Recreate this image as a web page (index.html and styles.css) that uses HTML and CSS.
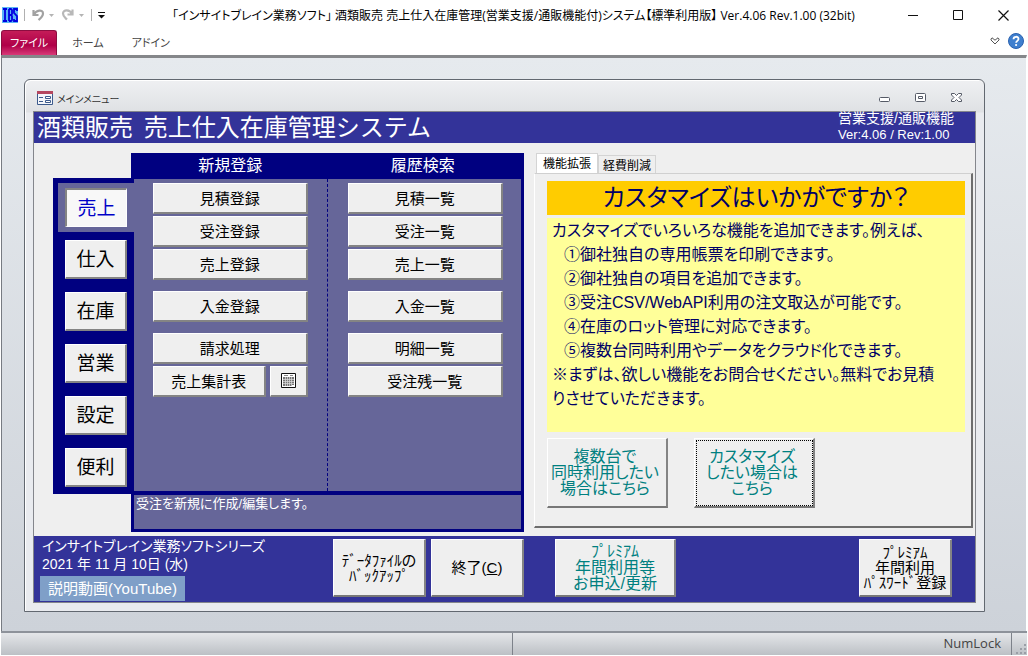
FILE: index.html
```html
<!DOCTYPE html>
<html lang="ja">
<head>
<meta charset="utf-8">
<title>酒類販売 売上仕入在庫管理システム</title>
<link rel="stylesheet" href="styles.css">
</head>
<body>
<header class="titlebar">
  <div class="quick">
    <svg class="logo" width="16" height="16" viewBox="0 0 16 16" role="img" aria-label="IBS"><rect width="16" height="16" fill="#5ab4f5"/><path d="M1 2h4M3 2v12M1 14h4M7 2v12M7 2h2l1 1v4l-1 1 1 1v4l-1 1H7M7 8h2M15 4V2h-3v4l3 3v5h-3v-2" fill="none" stroke="#0000e0" stroke-width="1.800"/></svg>
    <i class="bar"></i>
    <button class="ghost" aria-label="元に戻す"><svg width="24" height="14" viewBox="0 0 24 14"><path d="M2.500 2v5h5M3 6.500C5 2 12 1 12 5.500c0 3-2 4.500-4.500 6.500" fill="none" stroke="#a2a2a2" stroke-width="2.200"/><path d="M18 6h5l-2.500 3z" fill="#b4b4b4"/></svg></button>
    <button class="ghost" aria-label="やり直し"><svg width="24" height="14" viewBox="0 0 24 14"><path d="M11.500 1.500v5h-5M11 6C9 1.500 2 1 2 5.500c0 3 2 4 4 6" fill="none" stroke="#b8b8b8" stroke-width="2.200"/><path d="M18 6h5l-2.500 3z" fill="#b4b4b4"/></svg></button>
    <i class="bar"></i>
    <button class="ghost" aria-label="カスタマイズ"><svg width="8" height="8" viewBox="0 0 8 8"><path d="M0 1.500h7" stroke="#111"/><path d="M0 4h7L3.500 7.500z" fill="#111"/></svg></button>
  </div>
  <h1 class="app-title">「インサイトブレイン業務ソフト」 酒類販売 売上仕入在庫管理(営業支援/通販機能付)システム【標準利用版】 Ver.4.06 Rev.1.00 (32bit)</h1>
  <div class="caption">
    <button class="ghost" aria-label="最小化"><svg width="10" height="10" viewBox="0 0 10 10"><path d="M0 5.500h10" stroke="#111"/></svg></button>
    <button class="ghost" aria-label="最大化"><svg width="10" height="10" viewBox="0 0 10 10"><path d="M.5.5h9v9h-9z" fill="none" stroke="#111"/></svg></button>
    <button class="ghost" aria-label="閉じる"><svg width="11" height="11" viewBox="0 0 11 11"><path d="M.5.5l10 10M10.500.5l-10 10" stroke="#111" stroke-width="1.200"/></svg></button>
  </div>
</header>
<nav class="ribbon">
  <button class="ribbon-tab file">ファイル</button>
  <button class="ribbon-tab">ホーム</button>
  <button class="ribbon-tab">アドイン</button>
  <div class="ribbon-end">
    <button class="ghost" aria-label="リボンの展開"><svg width="10" height="8" viewBox="0 0 10 8"><path d="M1 2l1-1.200 3 2.400L8 .8 9 2v1L5 7 1 3z" fill="#fff" stroke="#555"/></svg></button>
    <button class="ghost" aria-label="ヘルプ"><svg width="16" height="16" viewBox="0 0 16 16"><circle cx="8" cy="8" r="7.500" fill="#3f7fce" stroke="#2a62b0"/><path d="M5.500 6.200C5.500 3 10.500 3 10.500 6c0 1.800-2.400 2-2.400 3.800" fill="none" stroke="#fff" stroke-width="1.800"/><circle cx="8.100" cy="12" r="1.100" fill="#fff"/></svg></button>
  </div>
</nav>
<main class="workspace">
  <section class="window">
    <div class="window-bar">
      <svg width="16" height="14" viewBox="0 0 16 14"><path d="M.5.500h15v13H.5z" fill="#f4f6fa" stroke="#3c5a8c"/><path d="M0 0h16v3H0z" fill="#b5475f"/><path d="M2 6.500h4M2 10.500h4" stroke="#3c5a8c"/><path d="M8.500 5.500h5v2h-5zM8.500 9.500h5v2h-5z" fill="#fff" stroke="#3c5a8c"/></svg>
      <h2 class="window-title">メインメニュー</h2>
      <div class="window-buttons">
        <button class="ghost" aria-label="最小化"><svg width="12" height="10" viewBox="0 0 12 10"><rect x=".5" y="4.500" width="10" height="4" rx="1" fill="#fff" stroke="#555a66"/></svg></button>
        <button class="ghost" aria-label="元のサイズ"><svg width="12" height="10" viewBox="0 0 12 10"><rect x=".5" y=".5" width="10" height="8" rx="1" fill="#fff" stroke="#555a66"/><path d="M3.500 3.500h4v2h-4z" fill="none" stroke="#555a66"/></svg></button>
        <button class="ghost" aria-label="閉じる"><svg width="12" height="10" viewBox="0 0 12 10"><path d="M.5.5h3l2 2 2-2h3v1.500L8 4.500 10.500 7v1.500h-3l-2-2-2 2h-3V7L3 4.500.5 2z" fill="#fff" stroke="#555a66"/></svg></button>
      </div>
    </div>
    <div class="form">
      <div class="form-head">
        <h3 class="form-title">酒類販売  売上仕入在庫管理システム</h3>
        <p class="version">営業支援/通販機能<br><span class="latin">Ver:4.06 / Rev:1.00</span></p>
      </div>
      <div class="form-main">
        <div class="menu">
          <div class="side">
            <div class="side-active"><button class="btn pressed">売上</button></div>
            <button class="btn">仕入</button>
            <button class="btn">在庫</button>
            <button class="btn">営業</button>
            <button class="btn">設定</button>
            <button class="btn">便利</button>
          </div>
          <div class="panel">
            <div class="panel-head"><span>新規登録</span><span>履歴検索</span></div>
            <div class="panel-body">
              <div class="col">
                <button class="btn">見積登録</button>
                <button class="btn">受注登録</button>
                <button class="btn">売上登録</button>
                <button class="btn apart">入金登録</button>
                <button class="btn apart">請求処理</button>
                <div class="pair">
                  <button class="btn">売上集計表</button>
                  <button class="btn small" aria-label="カレンダー"><svg width="15" height="15" viewBox="0 0 15 15"><path d="M.5.500h14v14H.5z" fill="#fff" stroke="#111"/><path d="M3 2.500h4M9 2.500h3" stroke="#888"/><path d="M2 4h11v9H2z" fill="#777"/><path d="M2 6.500h11M2 8.500h11M2 10.500h11M4.500 4v9M6.500 4v9M8.500 4v9M10.500 4v9" stroke="#ddd" stroke-width=".7"/><path d="M11 12h2v1h-2z" fill="#fff"/></svg></button>
                </div>
              </div>
              <div class="col">
                <button class="btn">見積一覧</button>
                <button class="btn">受注一覧</button>
                <button class="btn">売上一覧</button>
                <button class="btn apart">入金一覧</button>
                <button class="btn apart">明細一覧</button>
                <button class="btn">受注残一覧</button>
              </div>
            </div>
            <p class="hint">受注を新規に作成/編集します。</p>
          </div>
        </div>
        <div class="promo">
          <div class="tabs" role="tablist">
            <button class="tab current" role="tab" aria-selected="true">機能拡張</button>
            <button class="tab" role="tab" aria-selected="false">経費削減</button>
          </div>
          <div class="page">
            <h3 class="promo-title">カスタマイズはいかがですか？</h3>
            <div class="promo-text">
              <p>カスタマイズでいろいろな機能を追加できます。例えば、</p>
              <ul>
                <li>①御社独自の専用帳票を印刷できます。</li>
                <li>②御社独自の項目を追加できます。</li>
                <li>③受注CSV/WebAPI利用の注文取込が可能です。</li>
                <li>④在庫のロット管理に対応できます。</li>
                <li>⑤複数台同時利用やデータをクラウド化できます。</li>
              </ul>
              <p>※まずは、欲しい機能をお問合せください。無料でお見積<br>りさせていただきます。</p>
            </div>
            <div class="promo-actions">
              <button class="btn teal">複数台で<br>同時利用したい<br>場合はこちら</button>
              <button class="btn teal focused">カスタマイズ<br>したい場合は<br>こちら</button>
            </div>
          </div>
        </div>
      </div>
      <footer class="form-foot">
        <div class="info">
          <p>インサイトブレイン業務ソフトシリーズ</p>
          <p>2021 年 11 月 10日 (水)</p>
          <a class="video" href="#">説明動画(YouTube)</a>
        </div>
        <button class="btn">ﾃﾞｰﾀﾌｧｲﾙの<br>ﾊﾞｯｸｱｯﾌﾟ</button>
        <button class="btn">終了(<u>C</u>)</button>
        <button class="btn teal">ﾌﾟﾚﾐｱﾑ<br>年間利用等<br>お申込/更新</button>
        <button class="btn last">ﾌﾟﾚﾐｱﾑ<br>年間利用<br>ﾊﾟｽﾜｰﾄﾞ登録</button>
      </footer>
    </div>
  </section>
</main>
<div class="status">
  <div class="status-left"></div>
  <div class="status-right">NumLock</div>
  <svg class="grip" width="12" height="12" viewBox="0 0 12 12"><path d="M9 1h2v2H9zM9 5h2v2H9zM5 5h2v2H5zM9 9h2v2H9zM5 9h2v2H5zM1 9h2v2H1z" fill="#9a9ea6"/></svg>
</div>
</body>
</html>
```
FILE: styles.css
```css
* { box-sizing: border-box; }
body, h1, h2, h3, p, ul { margin: 0; padding: 0; font-weight: 400; }
ul { list-style: none; }
button { font: inherit; color: inherit; border: 0; padding: 0; background: none; white-space: nowrap; }
svg { display: block; }

body {
  display: flex;
  flex-direction: column;
  min-height: 100vh;
  padding-right: 1px;
  background: #fff;
  color: #000;
  font-family: "Liberation Sans", "Noto Sans CJK JP", sans-serif;
  font-size: 14px;
  font-feature-settings: "palt";
}

.titlebar {
  display: grid;
  grid-template-columns: 1fr auto 1fr;
  align-items: center;
  height: 30px;
}
.quick { display: flex; align-items: center; gap: 6px; padding-left: 2px; }
.bar { width: 1px; height: 12px; background: #b0b0b0; }
.app-title, .window-title, .ribbon { font-family: "Open Sans", "Noto Sans CJK JP", sans-serif; }
.app-title { font-size: 12px; white-space: nowrap; }
.caption { display: flex; align-items: center; justify-content: flex-end; gap: 35px; padding-right: 18px; }

.ribbon { display: flex; align-items: stretch; height: 25px; padding-left: 1px; color: #444; font-size: 11px; }
.ribbon-tab { padding: 0 12px 2px; }
.ribbon-tab + .ribbon-tab { padding: 0 13px 2px 15px; }
.ribbon-tab.file {
  padding: 0 8px 3px;
  border: 1px solid #8c0d40;
  border-bottom: 0;
  border-radius: 3px 3px 0 0;
  background: linear-gradient(#c41c58, #b00048 60%, #d83a78);
  color: #fff;
}
.ribbon-end { display: flex; align-items: center; gap: 8px; margin-left: auto; padding: 0 3px 3px 0; }

.workspace {
  flex: 1;
  margin-left: 1px;
  padding: 21px 41px 19px 22px;
  border-top: 3px solid #85878a;
  border-left: 1px solid #777b82;
  border-right: 1px solid #fff;
  background: linear-gradient(#e6eaee, #cdd2d9);
}
.window {
  border: 1px solid #626870;
  border-radius: 6px 6px 0 0;
  padding: 0 8px 8px;
  background: linear-gradient(#eff0f2, #dfe1e4 32px, #e9ebef 33px);
  box-shadow: inset 1px 1px #fff;
}
.window-bar { display: flex; align-items: center; height: 31px; padding: 5px 13px 0 4px; }
.window-title { margin-left: 4px; color: #333; font-size: 10px; }
.window-buttons { display: flex; gap: 24px; margin-left: auto; }

.form { border: 1px solid #84868c; background: #efefef; }
.form-head {
  display: flex;
  justify-content: space-between;
  height: 31px;
  padding: 0 21px 0 3px;
  background: #333399;
  color: #fff;
}
.form-title { font: 24px/28px "Noto Sans CJK JP", sans-serif; font-feature-settings: normal; white-space: pre; }
.version { font-size: 14px; line-height: 16px; margin-top: -2px; white-space: nowrap; }
.latin { font-size: 13px; }

.form-main { display: flex; gap: 10px; padding: 10px 2px 4px 19px; }
.menu { display: flex; flex: 471 1 0; align-items: flex-start; }
.side {
  position: relative;
  display: flex;
  flex-direction: column;
  gap: 13px;
  width: 81px;
  margin: 25px -3px 0 0;
  padding: 5px 7px 7px 12px;
  background: #000080;
  font-size: 19px;
}
.side-active { display: flex; margin: 0 -7px -5px; padding: 5px 7px; background: #666699; }
.side .btn { width: 62px; height: 39px; padding-bottom: 3px; }

.btn {
  border: 1px solid;
  border-width: 1px 2px 2px 1px;
  border-color: #fff #848484 #848484 #fff;
  background: #efefef;
}
.btn.pressed {
  border-width: 2px 1px 1px 2px;
  border-color: #848484 #fff #fff #848484;
  background: #f8f8f8;
  color: #0000c8;
}
.teal { color: #008080; }

.panel { flex: 1; border: solid #000080; border-width: 0 3px 3px; background: #666699; color: #fff; }
.panel-head { display: grid; grid-template-columns: 1fr 1fr; height: 26px; padding-right: 2px; background: #000080; font-size: 16px; line-height: 26px; text-align: center; }
.panel-body { display: grid; grid-template-columns: 1fr 1fr; height: 312px; color: #000; }
.col { display: flex; flex-direction: column; gap: 2px; padding: 4px 18px 0 20px; font-size: 15px; }
.col:first-child { padding: 4px 19px 0; border-right: 1px dashed #000080; }
.col .btn { height: 31px; padding-bottom: 2px; }
.col .apart { margin-top: 9px; }
.pair { display: flex; gap: 4px; }
.pair .btn { flex: 1; }
.pair .btn.small { display: flex; flex: 0 0 38px; align-items: center; justify-content: center; }
.hint { height: 38px; padding-left: 2px; border-top: 4px solid #000080; font-size: 13px; line-height: 18px; }

.promo { display: flex; flex: 439 1 0; flex-direction: column; margin-bottom: 4px; }
.tabs { display: flex; align-items: flex-end; padding-left: 2px; font-size: 12px; }
.tab { height: 18px; padding: 0 4px; border: 1px solid #d4d4d4; border-bottom: 0; }
.tab.current { height: 20px; padding: 0 6px 2px; background: #fff; }
.page {
  flex: 1;
  padding: 7px 6px 0 12px;
  border: 1px solid;
  border-width: 1px 2px 2px 1px;
  border-color: #d0d0d0 #6d6d6d #6d6d6d #fff;
}
.promo-title { height: 34px; background: #ffcc00; color: #000066; font-size: 24px; line-height: 34px; text-align: center; }
.promo-text { height: 214px; margin-top: 3px; padding: 1px 0 0 5px; background: #ffff99; color: #000066; font-size: 16px; line-height: 24px; white-space: nowrap; }
.promo-text li { padding-left: 12px; }
.promo-actions { display: flex; gap: 26px; margin-top: 6px; }
.promo-actions .btn { width: 121px; height: 70px; padding-right: 4px; font-size: 16px; line-height: 16px; }
.promo-actions .btn, .form-foot .btn { border-bottom-color: #777; }
.focused { outline: 1px dotted #000; outline-offset: -3px; }

.form-foot { display: flex; gap: 5px; height: 66px; padding: 3px 23px 0 6px; background: #333399; font-size: 15px; line-height: 15px; }
.info { flex: 0 0 288px; color: #fff; font-size: 14px; line-height: 18px; white-space: nowrap; }
.info p { padding-left: 2px; }
.info p:first-child { margin-top: -2px; }
.video { display: inline-block; height: 25px; margin-top: 3px; padding: 0 8px; background: #7f9fc8; color: #fff; font-size: 15px; line-height: 25px; text-decoration: none; }
.form-foot .btn { width: 93px; height: 58px; }
.form-foot .teal { width: 121px; margin-left: 26px; font-size: 16px; line-height: 16px; }
.form-foot .last { margin-left: auto; }

.status {
  display: flex;
  align-items: stretch;
  height: 24px;
  margin: 0 0 1px 1px;
  border-top: 2px solid #8d929a;
  background: linear-gradient(#e4e6e9, #bcc0c5);
  color: #444;
  font: 13px/20px "Open Sans", sans-serif;
}
.status-left { flex: 510 1 0; border-right: 1px solid #7d828a; }
.status-right { flex: 487 1 0; margin-right: 3px; padding-right: 10px; border-right: 1px solid #7d828a; text-align: right; }
.grip { align-self: flex-end; }
```
